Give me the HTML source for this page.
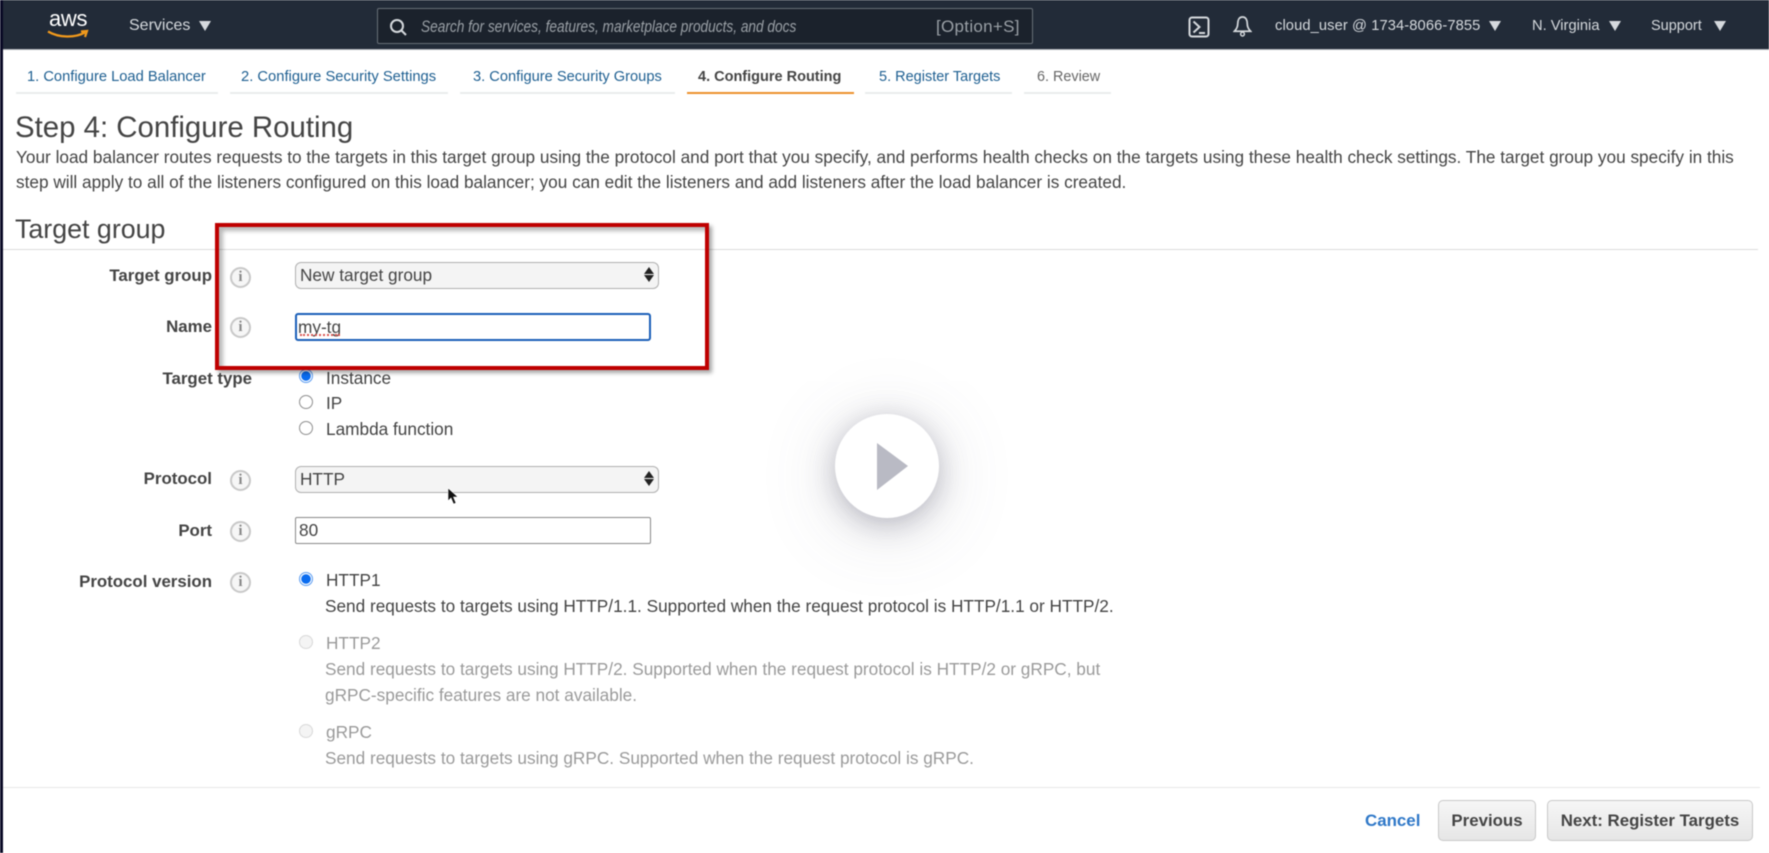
<!DOCTYPE html>
<html lang="en"><head><meta charset="utf-8"><title>Step 4: Configure Routing</title>
<style>
html,body{margin:0;padding:0;width:1769px;height:853px;overflow:hidden;background:#fff}
body{font-family:"Liberation Sans",sans-serif;color:#444;position:relative}
#w{position:absolute;inset:0;filter:blur(.45px)}
.t{position:absolute;white-space:nowrap;line-height:20px;height:20px;font-size:17.23px}
.h{color:#d5d9dd;font-size:15px}
.tab{position:absolute;top:67px;font-size:14.5px;line-height:20px;color:#1e5f91;white-space:nowrap}
.u{position:absolute;top:92px;height:2px;background:#eaeded}
.l{position:absolute;right:1557px;font-weight:bold;font-size:16.85px;line-height:20px;white-space:nowrap;color:#444}
.i{position:absolute;left:230px;width:17px;height:17px;border:2px solid #c8c8c8;border-radius:50%;text-align:center;font:bold 15px/17px "Liberation Serif",serif;color:#888;background:#f6f6f6}
.sel{position:absolute;left:295px;width:362px;height:25px;border:1px solid #b0b0b0;border-radius:6px;background:#f4f4f4;line-height:25px;font-size:17.23px;text-indent:4px;color:#444}
.sel:after{content:"";position:absolute;right:4px;top:4px;width:0;height:0;border:5px solid transparent;border-bottom:7px solid #222;border-top:0}
.sel:before{content:"";position:absolute;right:4px;top:12px;width:0;height:0;border:5px solid transparent;border-top:7px solid #222;border-bottom:0}
.inp{position:absolute;left:295px;width:354px;height:25px;border:1px solid #8a8a8a;border-radius:2px;line-height:25px;font-size:17.23px;text-indent:3px;background:#fff;color:#444}
.r{position:absolute;left:299px;width:12px;height:12px;border:1.5px solid #8e8e8e;border-radius:50%;background:#fff}
.on{border:1.5px solid #5a9bf0;background:radial-gradient(circle,#0a6cf0 0 4.5px,#fff 5px)}
.off{border-color:#d8d8d8;background:#f4f4f4}
.d{color:#9a9a9a}
.tri{position:absolute;width:0;height:0;border-left:6.5px solid transparent;border-right:6.5px solid transparent;border-top:10px solid #d5d9dd}
.btn{position:absolute;top:800px;height:39px;line-height:40px;border:1px solid #c8c8c8;border-radius:5px;background:linear-gradient(#f6f6f6,#e6e6e6);font-weight:bold;font-size:16.85px;text-align:center;color:#444}
</style></head><body><div id="w">
<div style="position:absolute;left:0;top:0;width:1769px;height:50px;background:#222b38;border-bottom:1px solid #aeb2b8;box-sizing:border-box"></div>
<div style="position:absolute;left:0;top:0;width:3px;height:853px;background:#0a0a26;z-index:5"></div>

<div class="t" style="left:49px;top:7px;color:#fff;font-size:22px;line-height:24px;letter-spacing:-.3px">aws</div>
<svg style="position:absolute;left:47px;top:29px" width="42" height="12" viewBox="0 0 42 12"><path d="M1 2.500C12 9 28 9 38 3.500M34 2.500L40 2L38 8" fill="none" stroke="#f29a1c" stroke-width="2.200"/></svg>
<div class="t h" style="left:129px;top:16px;font-size:16px">Services</div>
<div class="tri" style="left:199px;top:21px"></div>

<div style="position:absolute;left:377px;top:8px;width:654px;height:34px;border:1px solid #687078;border-radius:2px;background:#1b222c"></div>
<svg style="position:absolute;left:388px;top:17px" width="20" height="20" viewBox="0 0 20 20"><circle cx="9" cy="9" r="6" fill="none" stroke="#d5d9dd" stroke-width="2"/><path d="M13 13l5 5" stroke="#d5d9dd" stroke-width="2"/></svg>
<div class="t" style="left:421px;top:17px;font-style:italic;font-size:17px;color:#9aa0a6;transform:scaleX(.804);transform-origin:0 50%">Search for services, features, marketplace products, and docs</div>
<div class="t" style="left:936px;top:17px;font-size:17px;color:#9aa0a6;letter-spacing:.3px">[Option+S]</div>

<svg style="position:absolute;left:1188px;top:16px" width="22" height="22" viewBox="0 0 22 22"><rect x="1.500" y="1.500" width="19" height="19" rx="2.500" fill="none" stroke="#d5d9dd" stroke-width="2"/><path d="M5.500 5.500l6 5.500-6 5.500M11 17h6" fill="none" stroke="#d5d9dd" stroke-width="2"/></svg>
<svg style="position:absolute;left:1233px;top:15px" width="19" height="22" viewBox="0 0 20 23"><path d="M10 2C6 2 5 6 5 9c0 4-1.500 6-3.500 8h17c-2-2-3.500-4-3.500-8 0-3-1-7-5-7z" fill="none" stroke="#d5d9dd" stroke-width="1.800"/><circle cx="10" cy="20" r="2" fill="none" stroke="#d5d9dd" stroke-width="1.500"/></svg>
<div class="t h" style="left:1275px;top:16px;font-size:14.7px;letter-spacing:.1px">cloud_user @ 1734-8066-7855</div>
<div class="tri" style="left:1489px;top:21px;border-left-width:6px;border-right-width:6px"></div>
<div class="t h" style="left:1532px;top:16px;font-size:14.7px">N. Virginia</div>
<div class="tri" style="left:1609px;top:21px;border-left-width:6px;border-right-width:6px"></div>
<div class="t h" style="left:1651px;top:16px;font-size:14.5px">Support</div>
<div class="tri" style="left:1714px;top:21px;border-left-width:6px;border-right-width:6px"></div>

<div class="tab" style="left:27px;font-size:14.7px">1. Configure Load Balancer</div><div class="u" style="left:16px;width:202px"></div>
<div class="tab" style="left:241px;font-size:14.75px">2. Configure Security Settings</div><div class="u" style="left:230px;width:218px"></div>
<div class="tab" style="left:473px;font-size:14.65px">3. Configure Security Groups</div><div class="u" style="left:460px;width:215px"></div>
<div class="tab" style="left:698px;color:#444;font-weight:bold">4. Configure Routing</div><div class="u" style="left:687px;width:167px;background:#ec912d"></div>
<div class="tab" style="left:879px">5. Register Targets</div><div class="u" style="left:865px;width:147px"></div>
<div class="tab" style="left:1037px;color:#666;font-size:14.4px">6. Review</div><div class="u" style="left:1024px;width:87px"></div>

<div class="t" style="left:15px;top:112px;font-size:29.4px;line-height:32px;height:32px">Step 4: Configure Routing</div>
<div class="t" style="left:16px;top:147px">Your load balancer routes requests to the targets in this target group using the protocol and port that you specify, and performs health checks on the targets using these health check settings. The target group you specify in this</div>
<div class="t" style="left:16px;top:172px">step will apply to all of the listeners configured on this load balancer; you can edit the listeners and add listeners after the load balancer is created.</div>
<div class="t" style="left:15px;top:214px;font-size:26.8px;line-height:30px;height:30px">Target group</div>
<div style="position:absolute;left:3px;top:249px;width:1755px;height:1px;background:#dcdcdc"></div>

<div class="l" style="top:266px">Target group</div><div class="i" style="top:267px">i</div>
<div class="sel" style="top:262px">New target group</div>
<div class="l" style="top:317px">Name</div><div class="i" style="top:317px">i</div>
<div style="position:absolute;left:295px;top:313px;width:352px;height:24px;border:2px solid #1a5fb8;border-radius:3px;line-height:25px;font-size:17.23px;text-indent:1px;color:#444;background:#fff">my-tg<span style="position:absolute;left:3px;top:19px;width:40px;border-top:2px dotted #d9534f;height:0"></span></div>
<div class="l" style="top:369px;right:1517px">Target type</div>
<div class="r on" style="top:369px"></div><div class="t" style="left:326px;top:368px">Instance</div>
<div class="r" style="top:395px"></div><div class="t" style="left:326px;top:393px">IP</div>
<div class="r" style="top:421px"></div><div class="t" style="left:326px;top:419px">Lambda function</div>

<div class="l" style="top:469px">Protocol</div><div class="i" style="top:470px">i</div>
<div class="sel" style="top:466px">HTTP</div>
<svg style="position:absolute;left:447px;top:487px;z-index:3" width="12" height="19" viewBox="0 0 12 19"><path d="M1 1v13l3-3 2.500 6 2.500-1-2.500-6h4.500z" fill="#111" stroke="#fff" stroke-width=".6"/></svg>
<div class="l" style="top:521px">Port</div><div class="i" style="top:521px">i</div>
<div class="inp" style="top:517px">80</div>
<div class="l" style="top:572px">Protocol version</div><div class="i" style="top:572px">i</div>
<div class="r on" style="top:572px"></div><div class="t" style="left:326px;top:570px">HTTP1</div>
<div class="t" style="left:325px;top:596px">Send requests to targets using HTTP/1.1. Supported when the request protocol is HTTP/1.1 or HTTP/2.</div>
<div class="r off" style="top:635px"></div><div class="t d" style="left:326px;top:633px">HTTP2</div>
<div class="t d" style="left:325px;top:659px">Send requests to targets using HTTP/2. Supported when the request protocol is HTTP/2 or gRPC, but</div>
<div class="t d" style="left:325px;top:685px">gRPC-specific features are not available.</div>
<div class="r off" style="top:724px"></div><div class="t d" style="left:326px;top:722px">gRPC</div>
<div class="t d" style="left:325px;top:748px">Send requests to targets using gRPC. Supported when the request protocol is gRPC.</div>

<div style="position:absolute;left:3px;top:787px;width:1757px;height:1px;background:#e8e8e8"></div>
<div class="t" style="left:1365px;top:811px;color:#2f78c8;font-weight:bold;font-size:16.9px">Cancel</div>
<div class="btn" style="left:1438px;width:96px">Previous</div>
<div class="btn" style="left:1547px;width:204px">Next: Register Targets</div>

<div style="position:absolute;left:215px;top:223px;width:486px;height:139px;border:4px solid #bf0000;box-shadow:3px 3px 4px rgba(0,0,0,.35),inset 4px 4px 4px rgba(0,0,0,.28);z-index:4"></div>

<div style="position:absolute;left:835px;top:414px;width:104px;height:104px;border-radius:50%;background:#fff;box-shadow:0 6px 28px rgba(90,90,110,.38),0 10px 80px rgba(90,90,110,.2);z-index:4"></div>
<svg style="position:absolute;left:877px;top:443px;z-index:5" width="32" height="47" viewBox="0 0 32 47"><path d="M0 0L31 23L0 47Z" fill="#b9bac4"/></svg>
</div></body></html>
